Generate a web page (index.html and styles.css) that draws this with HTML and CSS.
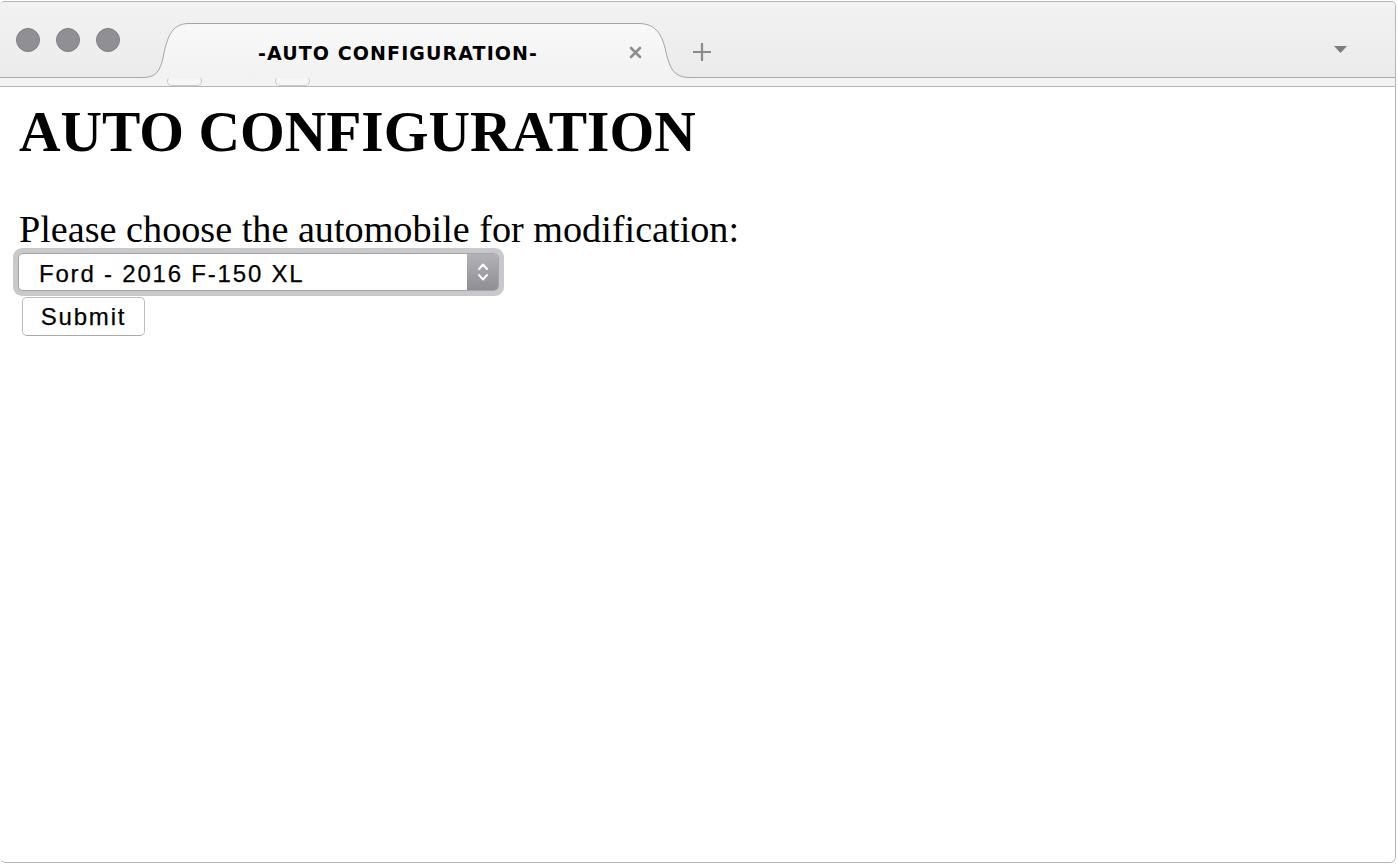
FILE: index.html
```html
<!DOCTYPE html>
<html lang="en">
<head>
<meta charset="utf-8">
<title>-AUTO CONFIGURATION-</title>
<link rel="stylesheet" href="styles.css">
</head>
<body>
<div class="window">
  <div class="tabrow">
    <div class="lights">
      <span class="light"></span>
      <span class="light"></span>
      <span class="light"></span>
    </div>
    <div class="tab">
      <svg class="tab-shape" width="547" height="56" viewBox="0 0 547 56" aria-hidden="true">
        <defs>
          <linearGradient id="tabfill" x1="0" y1="0" x2="0" y2="1">
            <stop offset="0" stop-color="#f9f9f9"/>
            <stop offset="1" stop-color="#f2f2f2"/>
          </linearGradient>
        </defs>
        <path d="M0,56 L0,55.5 C13,55.5 17,49 20,36 C24,16 28,1.5 46,1.5 L495,1.5 C513,1.5 519,12 523,30 C527,48 532,55.5 547,55.5 L547,56 Z" fill="url(#tabfill)"/>
        <path d="M0,55.5 C13,55.5 17,49 20,36 C24,16 28,1.5 46,1.5 L495,1.5 C513,1.5 519,12 523,30 C527,48 532,55.5 547,55.5" fill="none" stroke="#a3a3a3" stroke-width="1"/>
      </svg>
      <span class="tab-title">-AUTO CONFIGURATION-</span>
      <svg class="tab-close" width="13" height="13" viewBox="0 0 13 13" aria-hidden="true">
        <path d="M2,2 L11,11 M11,2 L2,11" stroke="#8e8e8e" stroke-width="2.6" stroke-linecap="round"/>
      </svg>
    </div>
    <div class="rest">
      <svg class="newtab" width="20" height="20" viewBox="0 0 20 20" aria-hidden="true">
        <path d="M10,1 L10,19 M1,10 L19,10" stroke="#8b8b8b" stroke-width="2.2"/>
      </svg>
      <svg class="listall" width="13" height="7" viewBox="0 0 13 7" aria-hidden="true">
        <path d="M0,0 L13,0 L6.5,7 Z" fill="#7c7c7c"/>
      </svg>
    </div>
  </div>
  <div class="strip">
    <span class="pill pill-a"></span>
    <span class="pill pill-b"></span>
  </div>
  <div class="content">
    <h1 class="title">AUTO CONFIGURATION</h1>
    <div class="prompt">Please choose the automobile for modification:</div>
    <div class="select-ring">
      <div class="select">
        <span class="select-value">Ford - 2016 F-150 XL</span>
        <span class="select-arrow">
          <svg width="14" height="26" viewBox="0 0 14 26" aria-hidden="true">
            <path d="M3,10 L7,5.5 L11,10" fill="none" stroke="#ffffff" stroke-width="2" stroke-linecap="round" stroke-linejoin="round"/>
            <path d="M3,16 L7,20.5 L11,16" fill="none" stroke="#ffffff" stroke-width="2" stroke-linecap="round" stroke-linejoin="round"/>
          </svg>
        </span>
      </div>
    </div>
    <button class="submit" type="button">Submit</button>
  </div>
</div>
</body>
</html>
```

FILE: styles.css
```css
html, body {
  margin: 0;
  padding: 0;
  background: #ffffff;
}

body {
  width: 1398px;
  height: 864px;
  overflow: hidden;
}

.window {
  width: 1396px;
  height: 862px;
  margin-top: 1px;
  box-sizing: border-box;
  border: 1px solid #b4b4b4;
  border-left: none;
  border-radius: 5px 5px 6px 6px;
  overflow: hidden;
  display: flex;
  flex-direction: column;
  background: #ffffff;
}

.tabrow {
  height: 76px;
  display: flex;
  flex-shrink: 0;
  background: linear-gradient(#f2f2f2, #ebebeb);
}

.lights {
  width: 143px;
  box-sizing: border-box;
  border-bottom: 1px solid #a9a9a9;
  display: flex;
  align-items: flex-start;
  gap: 16px;
  padding: 26px 0 0 16px;
}

.light {
  width: 24px;
  height: 24px;
  box-sizing: border-box;
  border-radius: 50%;
  background: #908f94;
  border: 1px solid #7f7e83;
}

.tab {
  position: relative;
  width: 547px;
  height: 56px;
  align-self: flex-end;
  box-sizing: border-box;
  display: flex;
  align-items: center;
  padding: 5px 0 0 115px;
}

.tab-shape {
  position: absolute;
  left: 0;
  top: 0;
}

.tab-title {
  position: relative;
  font-family: "DejaVu Sans", sans-serif;
  font-weight: bold;
  font-size: 19px;
  letter-spacing: 1.1px;
  color: #000000;
  white-space: nowrap;
}

.tab-close {
  position: relative;
  margin-left: auto;
  margin-right: 48px;
}

.rest {
  flex: 1;
  box-sizing: border-box;
  border-bottom: 1px solid #a9a9a9;
  display: flex;
  align-items: center;
  padding: 25px 48px 0 2px;
}

.listall {
  margin-left: auto;
  margin-top: -6px;
}

.strip {
  height: 9px;
  flex-shrink: 0;
  box-sizing: border-box;
  border-bottom: 1px solid #b6b6b6;
  background: #f3f3f3;
  display: flex;
  align-items: flex-start;
  padding-left: 167px;
}

.pill {
  width: 35px;
  height: 10px;
  margin-top: -2px;
  box-sizing: border-box;
  border: 1px solid #c9c9c9;
  border-top-color: #d2d2d2;
  border-radius: 5px;
  background: #f6f6f6;
}

.pill-b {
  margin-left: 73px;
}

.content {
  flex: 1;
  background: #ffffff;
  padding: 0 0 0 13px;
  display: flex;
  flex-direction: column;
  align-items: flex-start;
}

.title {
  margin: 12px 0 0 6px;
  font-family: "Liberation Serif", serif;
  font-weight: bold;
  font-size: 57.5px;
  line-height: 66px;
  color: #000000;
}

.prompt {
  margin: 45px 0 0 6px;
  font-family: "Liberation Serif", serif;
  font-size: 38.2px;
  line-height: 38px;
  color: #000000;
}

.select-ring {
  padding: 5px;
  border-radius: 9px;
  background: #c9c9cb;
}

.select {
  width: 481px;
  height: 38px;
  box-sizing: border-box;
  border: 1px solid #a4a4a8;
  border-radius: 5px;
  background: #ffffff;
  display: flex;
  align-items: stretch;
  overflow: hidden;
}

.select-value {
  flex: 1;
  display: flex;
  align-items: center;
  padding: 3px 0 0 20px;
  font-family: "Liberation Sans", sans-serif;
  font-size: 24px;
  letter-spacing: 1.8px;
  color: #000000;
  -webkit-text-stroke: 0.25px #000000;
}

.select-arrow {
  width: 31px;
  display: flex;
  align-items: center;
  justify-content: center;
  background: linear-gradient(#b3b3b7, #8e8e93);
}

.submit {
  margin: 1px 0 0 9px;
  width: 123px;
  height: 39px;
  box-sizing: border-box;
  border: 1px solid #bdbdbd;
  border-bottom-color: #a9a9a9;
  border-radius: 5px;
  background: #ffffff;
  font-family: "Liberation Sans", sans-serif;
  font-size: 24px;
  letter-spacing: 1.8px;
  color: #000000;
  -webkit-text-stroke: 0.25px #000000;
  padding: 0;
}
```
